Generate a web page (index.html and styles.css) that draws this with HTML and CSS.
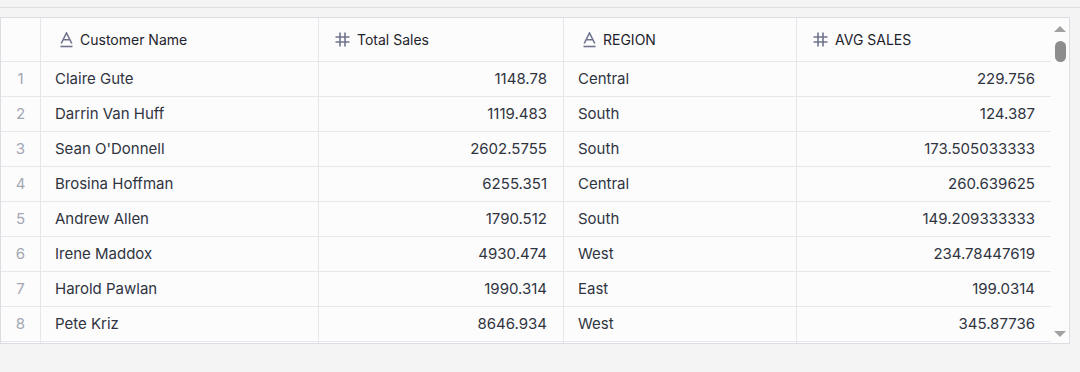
FILE: index.html
```html
<!DOCTYPE html>
<html lang="en">

<head>
    <meta charset="UTF-8">
    <meta name="viewport" content="width=device-width, initial-scale=1.0">
    <link rel="stylesheet" href="styles.css">
</head>

<body>
    <div class="topbar"></div>
    <div class="panel">
        <div class="sheet">
            <div class="grid">
                <div class="row head">
                    <div class="cell idx"></div>
                    <div class="cell"><svg class="icon alpha" viewBox="0 0 13 16"><path d="M1.2 11.5 L6.5 1 L11.8 11.5 M3.1 7.8 H9.9" /><path d="M0.5 14.5 H12.5" /></svg>Customer Name</div>
                    <div class="cell"><svg class="icon hash" viewBox="0 0 15 15"><path d="M5 0.5 V14.5 M10 0.5 V14.5 M0.5 5 H14.5 M0.5 10 H14.5" /></svg>Total Sales</div>
                    <div class="cell"><svg class="icon alpha" viewBox="0 0 13 16"><path d="M1.2 11.5 L6.5 1 L11.8 11.5 M3.1 7.8 H9.9" /><path d="M0.5 14.5 H12.5" /></svg>REGION</div>
                    <div class="cell"><svg class="icon hash" viewBox="0 0 15 15"><path d="M5 0.5 V14.5 M10 0.5 V14.5 M0.5 5 H14.5 M0.5 10 H14.5" /></svg>AVG SALES</div>
                </div>
                <div class="row">
                    <div class="cell idx">1</div>
                    <div class="cell">Claire Gute</div>
                    <div class="cell num">1148.78</div>
                    <div class="cell">Central</div>
                    <div class="cell num">229.756</div>
                </div>
                <div class="row">
                    <div class="cell idx">2</div>
                    <div class="cell">Darrin Van Huff</div>
                    <div class="cell num">1119.483</div>
                    <div class="cell">South</div>
                    <div class="cell num">124.387</div>
                </div>
                <div class="row">
                    <div class="cell idx">3</div>
                    <div class="cell">Sean O'Donnell</div>
                    <div class="cell num">2602.5755</div>
                    <div class="cell">South</div>
                    <div class="cell num">173.505033333</div>
                </div>
                <div class="row">
                    <div class="cell idx">4</div>
                    <div class="cell">Brosina Hoffman</div>
                    <div class="cell num">6255.351</div>
                    <div class="cell">Central</div>
                    <div class="cell num">260.639625</div>
                </div>
                <div class="row">
                    <div class="cell idx">5</div>
                    <div class="cell">Andrew Allen</div>
                    <div class="cell num">1790.512</div>
                    <div class="cell">South</div>
                    <div class="cell num">149.209333333</div>
                </div>
                <div class="row">
                    <div class="cell idx">6</div>
                    <div class="cell">Irene Maddox</div>
                    <div class="cell num">4930.474</div>
                    <div class="cell">West</div>
                    <div class="cell num">234.78447619</div>
                </div>
                <div class="row">
                    <div class="cell idx">7</div>
                    <div class="cell">Harold Pawlan</div>
                    <div class="cell num">1990.314</div>
                    <div class="cell">East</div>
                    <div class="cell num">199.0314</div>
                </div>
                <div class="row">
                    <div class="cell idx">8</div>
                    <div class="cell">Pete Kriz</div>
                    <div class="cell num">8646.934</div>
                    <div class="cell">West</div>
                    <div class="cell num">345.87736</div>
                </div>
                <div class="row stub">
                    <div class="cell idx"></div>
                    <div class="cell"></div>
                    <div class="cell"></div>
                    <div class="cell"></div>
                    <div class="cell"></div>
                </div>
            </div>
            <div class="scrollbar">
                <div class="arrow up"></div>
                <div class="track">
                    <div class="thumb"></div>
                </div>
                <div class="arrow down"></div>
            </div>
        </div>
    </div>
</body>

</html>
```

FILE: styles.css
```css
body {
    margin: 0;
    background: #f4f4f5;
    font-family: "Inter", "Liberation Sans", sans-serif;
    font-size: 15px;
    color: #30343f;
}

.topbar {
    height: 7px;
    border-bottom: 1px solid #dedee3;
}

.panel {
    padding-top: 9px;
    width: 1070px;
}

.sheet {
    display: flex;
    height: 325px;
    border: 1px solid #dcdde3;
    background: #fcfcfd;
    overflow: hidden;
}

.grid {
    width: 1050px;
}

.row {
    display: grid;
    grid-template-columns: 39px 278px 245px 233px 255px;
    height: 35px;
    border-bottom: 1px solid #e6e7eb;
    box-sizing: border-box;
    line-height: 18px;
}

.row.head {
    height: 44px;
    font-size: 14px;
    color: #1f232b;
}

.cell {
    display: flex;
    align-items: center;
    padding: 0 16px 0 14px;
    border-left: 1px solid #e6e7eb;
    white-space: nowrap;
    overflow: hidden;
}

.cell:first-child {
    border-left: none;
}

.head .cell {
    padding-left: 16px;
}

.cell.idx {
    justify-content: center;
    padding: 0;
    color: #a3a7b3;
}

.cell.num {
    justify-content: flex-end;
}

.icon {
    flex: none;
    fill: none;
    stroke: #6f748c;
    stroke-width: 1.6;
}

.icon.alpha {
    width: 13px;
    height: 16px;
    margin: 0 7px 0 3px;
}

.icon.hash {
    width: 15px;
    height: 15px;
    margin-right: 7px;
}

.scrollbar {
    width: 19px;
    display: flex;
    flex-direction: column;
    align-items: center;
    padding: 8px 0 6px;
}

.arrow {
    width: 0;
    height: 0;
    border-left: 6px solid transparent;
    border-right: 6px solid transparent;
}

.arrow.up {
    border-bottom: 6px solid #a1a1a1;
}

.arrow.down {
    border-top: 6px solid #a1a1a1;
}

.track {
    flex: 1;
    padding-top: 9px;
}

.thumb {
    width: 11px;
    height: 21px;
    border-radius: 6px;
    background: #8d8d8d;
}
```
